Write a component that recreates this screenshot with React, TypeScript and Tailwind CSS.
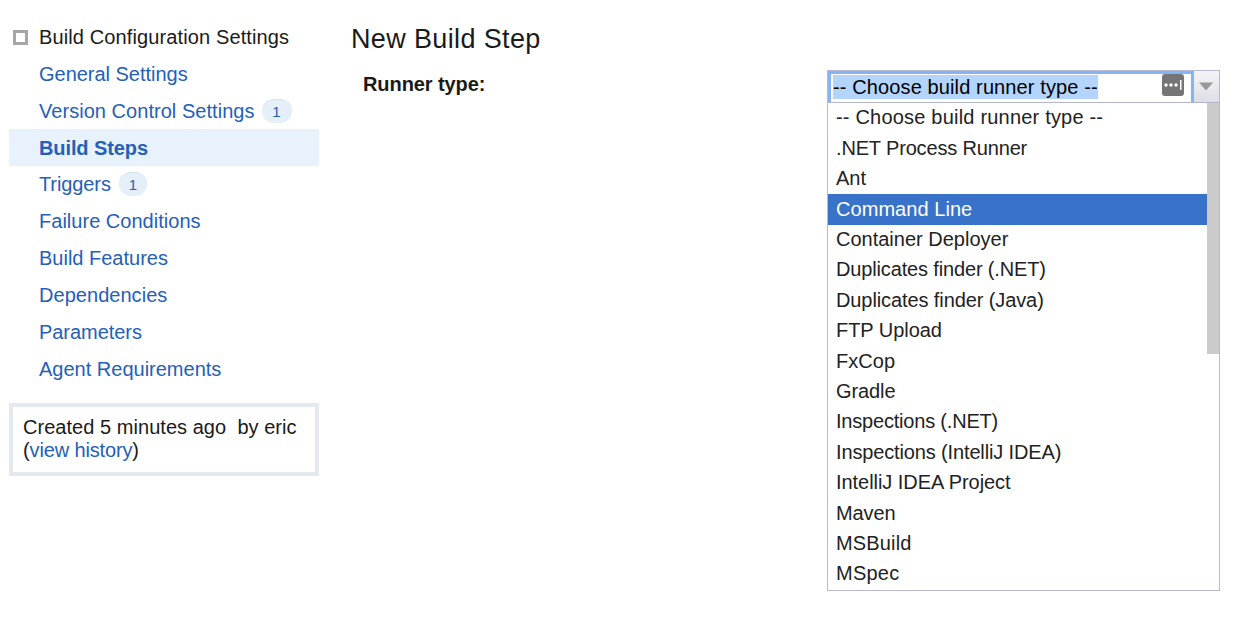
type NavItem = { label: string; count?: number; active?: boolean; cls: string; text: string; badge?: string };

const NAV: NavItem[] = [
  { label: "General Settings", cls: "h-[37px]", text: "-tracking-[0.02px]" },
  { label: "Version Control Settings", count: 1, cls: "h-[37px] pt-px", text: "tracking-[0.04px]", badge: "w-[30px] ml-[7px]" },
  { label: "Build Steps", active: true, cls: "h-[37px]", text: "-tracking-[0.1px]" },
  { label: "Triggers", count: 1, cls: "h-[36px]", text: "-tracking-[0.1px]", badge: "w-[28px] ml-2" },
  { label: "Failure Conditions", cls: "h-[37px]", text: "tracking-[0.02px]" },
  { label: "Build Features", cls: "h-[37px]", text: "tracking-[0px]" },
  { label: "Dependencies", cls: "h-[38px]", text: "tracking-[0.04px]" },
  { label: "Parameters", cls: "h-[36px]", text: "-tracking-[0.05px]" },
  { label: "Agent Requirements", cls: "h-[37px]", text: "tracking-[0px]" },
];

const RUNNERS: { label: string; cls: string }[] = [
  { label: "-- Choose build runner type --", cls: "tracking-[0.2px]" },
  { label: ".NET Process Runner", cls: "-tracking-[0.16px]" },
  { label: "Ant", cls: "tracking-[0px]" },
  { label: "Command Line", cls: "tracking-[0.05px]" },
  { label: "Container Deployer", cls: "tracking-[0px]" },
  { label: "Duplicates finder (.NET)", cls: "-tracking-[0.15px]" },
  { label: "Duplicates finder (Java)", cls: "-tracking-[0.1px]" },
  { label: "FTP Upload", cls: "-tracking-[0.05px]" },
  { label: "FxCop", cls: "tracking-[0.05px]" },
  { label: "Gradle", cls: "-tracking-[0.1px]" },
  { label: "Inspections (.NET)", cls: "-tracking-[0.2px]" },
  { label: "Inspections (IntelliJ IDEA)", cls: "-tracking-[0.14px]" },
  { label: "IntelliJ IDEA Project", cls: "-tracking-[0.05px]" },
  { label: "Maven", cls: "-tracking-[0.1px]" },
  { label: "MSBuild", cls: "tracking-[0.15px]" },
  { label: "MSpec", cls: "tracking-[0.25px]" },
];

function Sidebar() {
  return (
    <aside className="ml-[9px] w-[310px] shrink-0 pt-[19px]">
      <div className="flex h-9 items-center pl-1 text-[#1a1a1a]">
        <span className="mr-[11px] size-[15px] border-[3px] border-[#a6a6a6]" />
        <span className="tracking-[0.12px]">Build Configuration Settings</span>
      </div>
      <nav>
        {NAV.map((n) => (
          <div
            key={n.label}
            className={`flex items-center pl-[30px] text-[#2460b8] ${n.cls} ${n.active ? "bg-[#e8f2fd] font-bold" : ""}`}
          >
            <span className={n.text}>{n.label}</span>
            {n.count !== undefined && (
              <span className={`flex h-6 items-center justify-center rounded-full border-t border-[#d5e0ee] bg-[#e5effa] text-[15px] ${n.badge}`}>
                {n.count}
              </span>
            )}
          </div>
        ))}
      </nav>
      <div className="mt-4 h-[73px] border-4 border-[#e4e9f0] px-[10px] pt-[9px] leading-[23px] whitespace-pre text-[#1a1a1a]">
        <p className="tracking-[0.04px]">Created 5 minutes ago{"  "}by eric</p>
        <p className="-tracking-[0.14px]">
          (<a className="text-[#2460b8]">view history</a>)
        </p>
      </div>
    </aside>
  );
}

function RunnerSelect() {
  return (
    <div className="mt-[70px] h-[521px] w-[393px] border border-[#b9b9d2] bg-white">
      <div className="flex h-[32px] border-b border-[#b5b5cb]">
        <div className="flex flex-1 items-start border-x-[3px] border-t-[3px] border-[#84b5f2] pl-[2px]">
          <span className="mt-px h-[24px] bg-[#b3d4fd] leading-[25px] tracking-[0.12px] text-black">
            -- Choose build runner type --
          </span>
          <svg className="mr-[7px] ml-auto" width="22" height="22" viewBox="0 0 22 22">
            <rect width="22" height="22" rx="3" fill="#757575" />
            <circle cx="4" cy="11" r="1.7" fill="#fff" />
            <circle cx="9" cy="11" r="1.7" fill="#fff" />
            <circle cx="14" cy="11" r="1.7" fill="#fff" />
            <rect x="18" y="6" width="1.5" height="10" fill="#fff" />
          </svg>
        </div>
        <div className="flex w-[25px] items-center justify-center bg-linear-to-b from-[#f3f3f8] to-[#dedee6] pr-px">
          <svg width="16" height="9" viewBox="0 0 16 9">
            <path d="M1 0.5H15L8 8.5Z" fill="#999" />
          </svg>
        </div>
      </div>
      <div className="flex h-[487px] justify-between">
        <ul className="flex-1 text-[#222]">
          {RUNNERS.map((r, i) => (
            <li
              key={r.label}
              className={`flex h-[30.4px] items-center pb-[1.5px] pl-2 ${i === 3 ? "bg-[#3873c9] text-white" : ""}`}
            >
              <span className={r.cls}>{r.label}</span>
            </li>
          ))}
        </ul>
        <div className="h-[251px] w-[12px] bg-[#cbcbcb]" />
      </div>
    </div>
  );
}

export default function App() {
  return (
    <div className="flex h-[623px] w-[1260px] overflow-hidden bg-white font-['Liberation_Sans',Arial,sans-serif] text-[20px] leading-6 whitespace-nowrap">
      <Sidebar />
      <main className="ml-8 w-[476px] shrink-0 text-[#1a1a1a]">
        <h1 className="mt-[23px] text-[27px] leading-8 tracking-[0.36px]">New Build Step</h1>
        <div className="mt-[17px] pl-3 font-bold -tracking-[0.08px]">Runner type:</div>
      </main>
      <RunnerSelect />
    </div>
  );
}
